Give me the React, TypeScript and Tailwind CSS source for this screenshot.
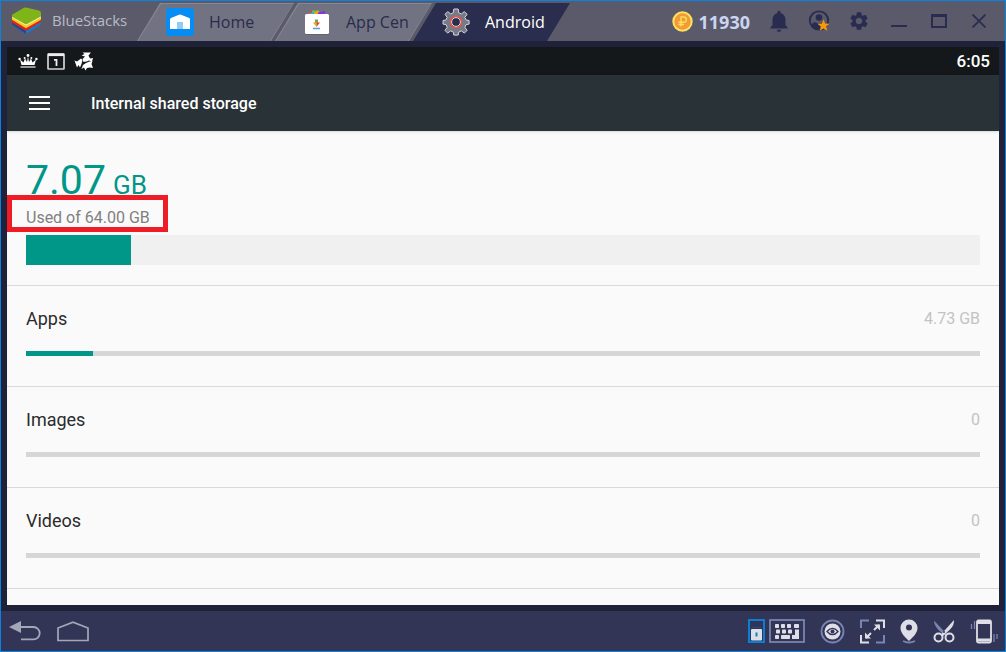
import React from 'react';
import { MdNotifications, MdSettings } from 'react-icons/md';

interface StorageRow {
  label: string;
  value: string;
  percent: number;
}

const rows: StorageRow[] = [
  { label: 'Apps', value: '4.73 GB', percent: 7 },
  { label: 'Images', value: '0', percent: 0 },
  { label: 'Videos', value: '0', percent: 0 },
];

const Logo = () => (
  <svg width="32" height="28" viewBox="0 0 32 28" aria-hidden="true">
    <path d="M1 17.5 15 26.8 30 17.5V15L15 23 1 14z" fill="#0b7fd0" />
    <path d="M1 17.5 15 26.8V23L1 14z" fill="#174a9c" />
    <path d="M1 15.5 15 24 30 15V12.5L15 20.5 1 12z" fill="#e2231a" />
    <path d="M1 12.8 15 21.3 30 12.8V10L15 18.2 1 9.5z" fill="#fbc91b" />
    <path d="M1 10.5 15 18.8 30 10.5V9L15 16.5 1 8.5z" fill="#f4f1a8" />
    <path d="M1 7.8 13 .8Q14 .3 16 .7L28 3.5Q30 4 30 6V9.3L16 17Q15 17.5 14 17L1 9.8z" fill="#7fb519" />
  </svg>
);

const HomeIcon = () => (
  <svg width="28" height="28" viewBox="0 0 28 28" aria-hidden="true">
    <rect width="28" height="28" rx="3" fill="#068cf2" />
    <path d="M4 11.5Q4 10.5 5 10L13 6.8Q14 6.4 15 6.8L23.3 10Q24 10.3 24 11.5V21H4z" fill="#fff" />
    <rect x="11" y="14" width="6" height="7" fill="#8fcdf8" />
  </svg>
);

const AppCenterIcon = () => (
  <svg width="26" height="27" viewBox="0 0 26 27" aria-hidden="true">
    <path d="M4 3 9 1.500V9H4z" fill="#ee3b35" />
    <path d="M8 1.500h7V9H8z" fill="#7cbd3a" />
    <path d="M4 4.500 10 3V9H4z" fill="#26b6d8" />
    <path d="M10 4 14 1.500l3 3v4h-7z" fill="#f4a21c" />
    <path d="M14 3.500 21 2v7h-7z" fill="#8e2de2" />
    <rect x="1" y="6" width="24" height="20" rx="1.500" fill="#55565f" opacity=".5" />
    <rect x="1" y="5" width="24" height="20" rx="1.500" fill="#fff" />
    <path d="M11 10.500h3V14h-3z" fill="#63b246" />
    <path d="M9 13.500h3.500V18z" fill="#f4a21c" />
    <path d="M12.500 13.500H16L12.500 18z" fill="#e4442f" />
    <path d="M9 19.500h7" stroke="#4fa3d1" strokeWidth="1.400" />
  </svg>
);

const AndroidGear = () => (
  <svg width="28" height="28" viewBox="0 0 28 28" aria-hidden="true">
    <path
      d="M11.800 1h4.400l.5 3.700 2.700 1.200 3-2.300 2.700 2.700-2.200 3.100 1.200 2.600 3 .5v3.600l-3 .5-1.200 2.700 2.200 3.100-2.700 2.700-3-2.200-2.700 1.200-.5 3h-4.400l-.5-3-2.700-1.200-3 2.200L3 22.400l2.200-3.100L4 16.600l-3-.5v-3.600l3-.5 1.200-2.600L3 6.300l2.700-2.700 3 2.300 2.600-1.200z"
      fill="#777986"
      stroke="#d3d4dc"
      strokeWidth="1"
      strokeLinejoin="round"
    />
    <circle cx="14" cy="14" r="5.600" fill="#2a2d4d" stroke="#e8554b" strokeWidth="1.600" />
    <circle cx="14" cy="14" r="4.400" fill="none" stroke="#d8dae0" strokeWidth="1" />
  </svg>
);

const Coin = () => (
  <svg width="21" height="21" viewBox="0 0 21 21" aria-hidden="true">
    <circle cx="10.5" cy="10.5" r="9.2" fill="#f2993a" stroke="#fbe35b" strokeWidth="2" />
    <path d="M9 15.500V6h2.700q2.600 0 2.600 2.700t-2.600 2.600H6.500M6.500 13.500H12" fill="none" stroke="#fde05c" strokeWidth="1.400" />
  </svg>
);

const AccountIcon = () => (
  <svg width="22" height="22" viewBox="0 0 22 22" aria-hidden="true">
    <circle cx="11" cy="10.5" r="9.2" fill="none" stroke="#292c50" strokeWidth="1.8" />
    <circle cx="11" cy="7.5" r="3.3" fill="#292c50" />
    <path d="M3.5 14.5Q5 12 7.5 12.2q3.5 2.4 7 0 2.5-.2 4 2.3Q16 19 11 19t-7.5-4.5z" fill="#292c50" />
    <path d="m15.5 9.5 1.7 3.9 4.3.3-3.3 2.8 1.1 4.3-3.8-2.3-3.8 2.3 1.1-4.3-3.3-2.8 4.3-.3z" fill="#f59a0c" />
  </svg>
);

const CrownIcon = () => (
  <svg width="20" height="16" viewBox="0 0 20 16" aria-hidden="true">
    <path d="M3.500 12 2 6.500l3.500 3L7 5.500l2 3.500 1-5.500L11 9l2-3.500 1.500 4 3.500-3-1.500 5.500z" fill="#fff" />
    <circle cx="10" cy="2.500" r="1.400" fill="#fff" />
    <circle cx="1.600" cy="6" r="1.200" fill="#fff" />
    <circle cx="18.400" cy="6" r="1.200" fill="#fff" />
    <circle cx="6.600" cy="5" r="1" fill="#fff" />
    <circle cx="13.400" cy="5" r="1" fill="#fff" />
    <path d="M2.500 14h15" stroke="#999" strokeWidth="2" />
  </svg>
);

const CalendarIcon = () => (
  <svg width="18" height="17" viewBox="0 0 18 17" aria-hidden="true">
    <rect x="1" y="1" width="16" height="15" rx=".5" fill="none" stroke="#d2d4d5" strokeWidth="1.7" />
    <path d="M1 1.8h16" stroke="#eee" strokeWidth="2.6" />
    <path d="M7 6.8h2.5V13" fill="none" stroke="#eee" strokeWidth="1.8" />
  </svg>
);

const CreatureIcon = () => (
  <svg width="20" height="19" viewBox="0 0 20 19" aria-hidden="true">
    <path d="M8.500.5h8.500l-2.500 3 1.500 3 3-.5-1 3.500-3-1-2.500 1-3 .5-1-3 2.500-2.500-3.500-1 3-1.500z" fill="#fff" />
    <path d="M.500 8.500 3 9.500l4-3 1.500 1.500-1 4L6 15.500 4.500 13 3 15.500z" fill="#fff" />
    <path d="m12 11 3.500-1.500L18.500 9 17.500 12l1.500 4-3-.5-3 .5-1.500 2.500L10 15.500 7.500 17l1.500-4z" fill="#fff" />
  </svg>
);

const BackIcon = () => (
  <svg width="32" height="20" viewBox="0 0 32 20" aria-hidden="true">
    <path d="M0 6 12 0v12z" fill="#a5a7b8" />
    <path d="M10 6h14.5a6.2 6.2 0 0 1 0 12.4H12" fill="none" stroke="#a5a7b8" strokeWidth="1.8" />
  </svg>
);

const HomeOutline = () => (
  <svg width="32" height="21" viewBox="0 0 32 21" aria-hidden="true">
    <path d="M1 7 16 1.2 31 7v12.5H1z" fill="none" stroke="#a5a7b8" strokeWidth="1.7" />
  </svg>
);

const LockIcon = () => (
  <svg width="17" height="24" viewBox="0 0 17 24" aria-hidden="true">
    <rect x="1" y="1" width="15" height="22" fill="none" stroke="#087fd5" strokeWidth="2" />
    <path d="M4 10V8.500h9V10" fill="none" stroke="#1b4d86" strokeWidth="1" />
    <rect x="3" y="10" width="11" height="11.500" rx="1" fill="#dedfe6" />
    <path d="M8.500 13.500v4" stroke="#087fd5" strokeWidth="2" />
  </svg>
);

const KeyboardIcon = () => (
  <svg width="36" height="24" viewBox="0 0 36 24" aria-hidden="true">
    <rect x="1" y="1" width="34" height="22" fill="none" stroke="#7785b0" strokeWidth="1.8" />
    <g fill="#dedfe6">
      <rect x="6" y="5" width="4" height="4" rx=".8" />
      <rect x="12" y="5" width="4" height="4" rx=".8" />
      <rect x="18" y="5" width="4" height="4" rx=".8" />
      <rect x="25" y="5" width="5" height="4" rx=".8" />
      <rect x="7" y="10.500" width="4" height="4" rx=".8" />
      <rect x="13" y="10.500" width="4" height="4" rx=".8" />
      <rect x="19" y="10.500" width="4" height="4" rx=".8" />
      <rect x="6" y="16" width="4" height="4" rx=".8" />
      <rect x="12" y="16" width="9" height="4" rx=".8" />
      <path d="M26 10.500h4V20h-7v-4h3z" />
    </g>
  </svg>
);

const EyeIcon = () => (
  <svg width="25" height="25" viewBox="0 0 25 25" aria-hidden="true">
    <circle cx="12.5" cy="12.5" r="11" fill="none" stroke="#7785b0" strokeWidth="1.8" />
    <circle cx="12.5" cy="12.5" r="8" fill="#dedfe6" />
    <path d="M7 12.5q5.5-6.4 11 0-5.5 6.4-11 0z" fill="none" stroke="#333556" strokeWidth="1.3" />
    <circle cx="12.5" cy="12.5" r="2" fill="#333556" />
  </svg>
);

const ExpandIcon = () => (
  <svg width="25" height="25" viewBox="0 0 25 25" fill="none" strokeWidth="2" aria-hidden="true">
    <path d="M1 9V1.5h8M24 16v7.5h-8" stroke="#7785b0" />
    <path d="M16 1.5h8V9M9 23.5H1V16" stroke="#dedfe6" />
    <path d="m14 11 5-5M11 14l-5 5" stroke="#dedfe6" />
    <path d="M14 5.5h6v6zM5 13.5v6h6z" fill="#dedfe6" />
  </svg>
);

const PinIcon = () => (
  <svg width="18" height="25" viewBox="0 0 18 25" aria-hidden="true">
    <path d="M3 22q6 3 12 0" fill="none" stroke="#7785b0" strokeWidth="1.8" />
    <path d="M9 .5A8.500 8.500 0 0 1 17.500 9C17.500 14 13 18 9 22 5 18 .5 14 .5 9A8.500 8.500 0 0 1 9 .5z" fill="#dedfe6" />
    <circle cx="9" cy="8.500" r="3" fill="#333556" />
  </svg>
);

const ScissorsIcon = () => (
  <svg width="22" height="24" viewBox="0 0 22 24" aria-hidden="true">
    <path d="M1 1.500 14.500 16l-2 1L5 10.500Q1 6 1 1.500z" fill="#7785b0" />
    <path d="M21 1 7.500 16l2 1.500L17 10.500Q21.500 6 21 1z" fill="#dedfe6" />
    <circle cx="5.500" cy="18.500" r="4" fill="none" stroke="#dedfe6" strokeWidth="2" />
    <circle cx="16.500" cy="18.500" r="4" fill="none" stroke="#dedfe6" strokeWidth="2" />
    <circle cx="11" cy="13" r="1" fill="#333556" />
  </svg>
);

const ShakeIcon = () => (
  <svg width="28" height="25" viewBox="0 0 28 25" aria-hidden="true">
    <rect x="7" y="1.500" width="14" height="22" rx="1.500" fill="none" stroke="#dedfe6" strokeWidth="1.800" />
    <path d="M7 3.500h14M7 21h14" stroke="#dedfe6" strokeWidth="3" />
    <path d="M4.500 2v8M1.500 5v5M24 15v8M27 15v5" stroke="#7785b0" strokeWidth="1.300" />
  </svg>
);

// the outer shape is the light edge, the ::before is the face of the tab
const tabShape =
  'relative isolate flex h-[38px] w-[157px] items-center pl-[29px] [clip-path:polygon(23px_0,100%_0,calc(100%_-_23px)_100%,0_100%)] before:absolute before:inset-x-px before:top-px before:bottom-0 before:-z-10 before:[clip-path:polygon(23px_0,100%_0,calc(100%_-_23px)_100%,0_100%)]';

const TitleBar: React.FC = () => (
  <header className="flex h-10 shrink-0 items-end justify-between bg-[#5a5a6b] font-['Open_Sans',sans-serif]">
    <div className="flex items-end">
      <div className="flex h-10 w-[136px] items-center gap-[9px] pl-[10px] text-[15px] text-[#b9bac4]">
        <Logo />
        <span className="pb-[2px]">BlueStacks</span>
      </div>
      <nav className="flex text-base text-[#292b4c]">
        <button className={`${tabShape} gap-[15px] bg-[#868794] before:bg-[#727382]`}>
          <HomeIcon />
          Home
        </button>
        <button className={`${tabShape} -ml-[19px] gap-4 bg-[#868794] before:bg-[#727382]`}>
          <AppCenterIcon />
          App Cen
        </button>
        <button className={`${tabShape} -ml-[19px] gap-[15px] bg-[#2a2d4d] text-white`}>
          <AndroidGear />
          Android
        </button>
      </nav>
    </div>
    <div className="flex h-10 items-center pr-[6px] text-[#292c50]">
      <div className="flex items-center gap-[6px] pr-[9px] text-lg font-bold text-[#cbd5f3]">
        <Coin />
        <span className="pt-px">11930</span>
      </div>
      <button aria-label="Notifications" className="flex w-10 justify-center">
        <MdNotifications size={26} />
      </button>
      <button aria-label="Account" className="flex w-10 justify-center">
        <AccountIcon />
      </button>
      <button aria-label="Settings" className="flex w-10 justify-center">
        <MdSettings size={22} />
      </button>
      <button aria-label="Minimize" className="flex w-10 justify-center">
        <svg width="16" height="16" viewBox="0 0 16 16">
          <path d="M0 13h16" stroke="currentColor" strokeWidth="2" />
        </svg>
      </button>
      <button aria-label="Maximize" className="flex w-10 justify-center">
        <svg width="16" height="14" viewBox="0 0 16 14">
          <path d="M1 1.500h14V13H1z" fill="none" stroke="currentColor" strokeWidth="2" />
          <path d="M0 1.500h16" stroke="currentColor" strokeWidth="3" />
        </svg>
      </button>
      <button aria-label="Close" className="flex w-10 justify-center">
        <svg width="14" height="14" viewBox="0 0 14 14">
          <path d="m.5.5 13 13M13.500.5l-13 13" stroke="currentColor" strokeWidth="1.800" />
        </svg>
      </button>
    </div>
  </header>
);

const StorageItem: React.FC<{ row: StorageRow }> = ({ row }) => (
  <li className="border-t border-[#d9d9d9] px-[19px] pt-5 pb-[30px]">
    <div className="flex h-[26px] items-center justify-between">
      <span className="text-lg text-[#2b2b2b]">{row.label}</span>
      <span className="text-base text-[#c3c3c3]">{row.value}</span>
    </div>
    <div className="mt-[19px] h-[5px] bg-[#d6d6d6]">
      <div className="h-full bg-[#009688]" style={{ width: `${row.percent}%` }} />
    </div>
  </li>
);

const StorageScreen: React.FC = () => (
  <main className="flex min-h-0 flex-1 flex-col overflow-hidden bg-[#fafafa] font-[Roboto,sans-serif]">
    <div className="flex h-7 shrink-0 items-center justify-between bg-[#14181a] pr-[9px] pl-[11px]">
      <div className="flex items-center gap-[9px]">
        <CrownIcon />
        <CalendarIcon />
        <CreatureIcon />
      </div>
      <span className="pt-[2px] text-[17px] font-medium text-white">6:05</span>
    </div>
    <div className="z-10 flex h-14 shrink-0 items-center gap-10 bg-[#293237] pl-[22px] text-white shadow">
      <button aria-label="Menu" className="flex">
        <svg width="22" height="16" viewBox="0 0 22 16">
          <path d="M0 2h21M0 8h21M0 14h21" stroke="currentColor" strokeWidth="2" />
        </svg>
      </button>
      <h1 className="pt-[2px] text-base font-medium">Internal shared storage</h1>
    </div>
    <section className="shrink-0 px-[19px] pt-7 pb-5">
      <div className="flex items-baseline gap-[7px] text-[#009688]">
        <span className="text-[41px] leading-[42px]">7.07</span>
        <span className="text-[26px] leading-[26px]">GB</span>
      </div>
      <div className="relative flex h-[34px] items-center text-base text-[#808080]">
        Used of 64.00 GB
        <div className="absolute -top-[6px] -left-[19px] h-[37px] w-[161px] border-5 border-[#ee1c25]" />
      </div>
      <div className="h-[30px] bg-[#f0f0f0]">
        <div className="h-full w-[11%] bg-[#009688]" />
      </div>
    </section>
    <ul className="shrink-0">
      {rows.map((row) => (
        <StorageItem key={row.label} row={row} />
      ))}
    </ul>
    <div className="border-t border-[#d9d9d9]" />
  </main>
);

const BottomBar: React.FC = () => (
  <footer className="flex h-10 shrink-0 items-center justify-between bg-[#333556] pr-[7px] pl-2">
    <div className="flex items-center gap-4">
      <button aria-label="Back">
        <BackIcon />
      </button>
      <button aria-label="Home screen">
        <HomeOutline />
      </button>
    </div>
    <div className="flex items-center gap-[15px]">
      <div className="flex gap-1">
        <button aria-label="Lock cursor">
          <LockIcon />
        </button>
        <button aria-label="Keyboard controls">
          <KeyboardIcon />
        </button>
      </div>
      <button aria-label="Show overlay">
        <EyeIcon />
      </button>
      <button aria-label="Full screen">
        <ExpandIcon />
      </button>
      <button aria-label="Set location">
        <PinIcon />
      </button>
      <button aria-label="Screenshot">
        <ScissorsIcon />
      </button>
      <button aria-label="Shake">
        <ShakeIcon />
      </button>
    </div>
  </footer>
);

const App: React.FC = () => {
  return (
    <div className="flex h-screen flex-col border border-[#0a82e0] bg-[#20223a]">
      <TitleBar />
      <div className="flex min-h-0 flex-1 flex-col p-[6px]">
        <StorageScreen />
      </div>
      <BottomBar />
    </div>
  );
};

export default App;
